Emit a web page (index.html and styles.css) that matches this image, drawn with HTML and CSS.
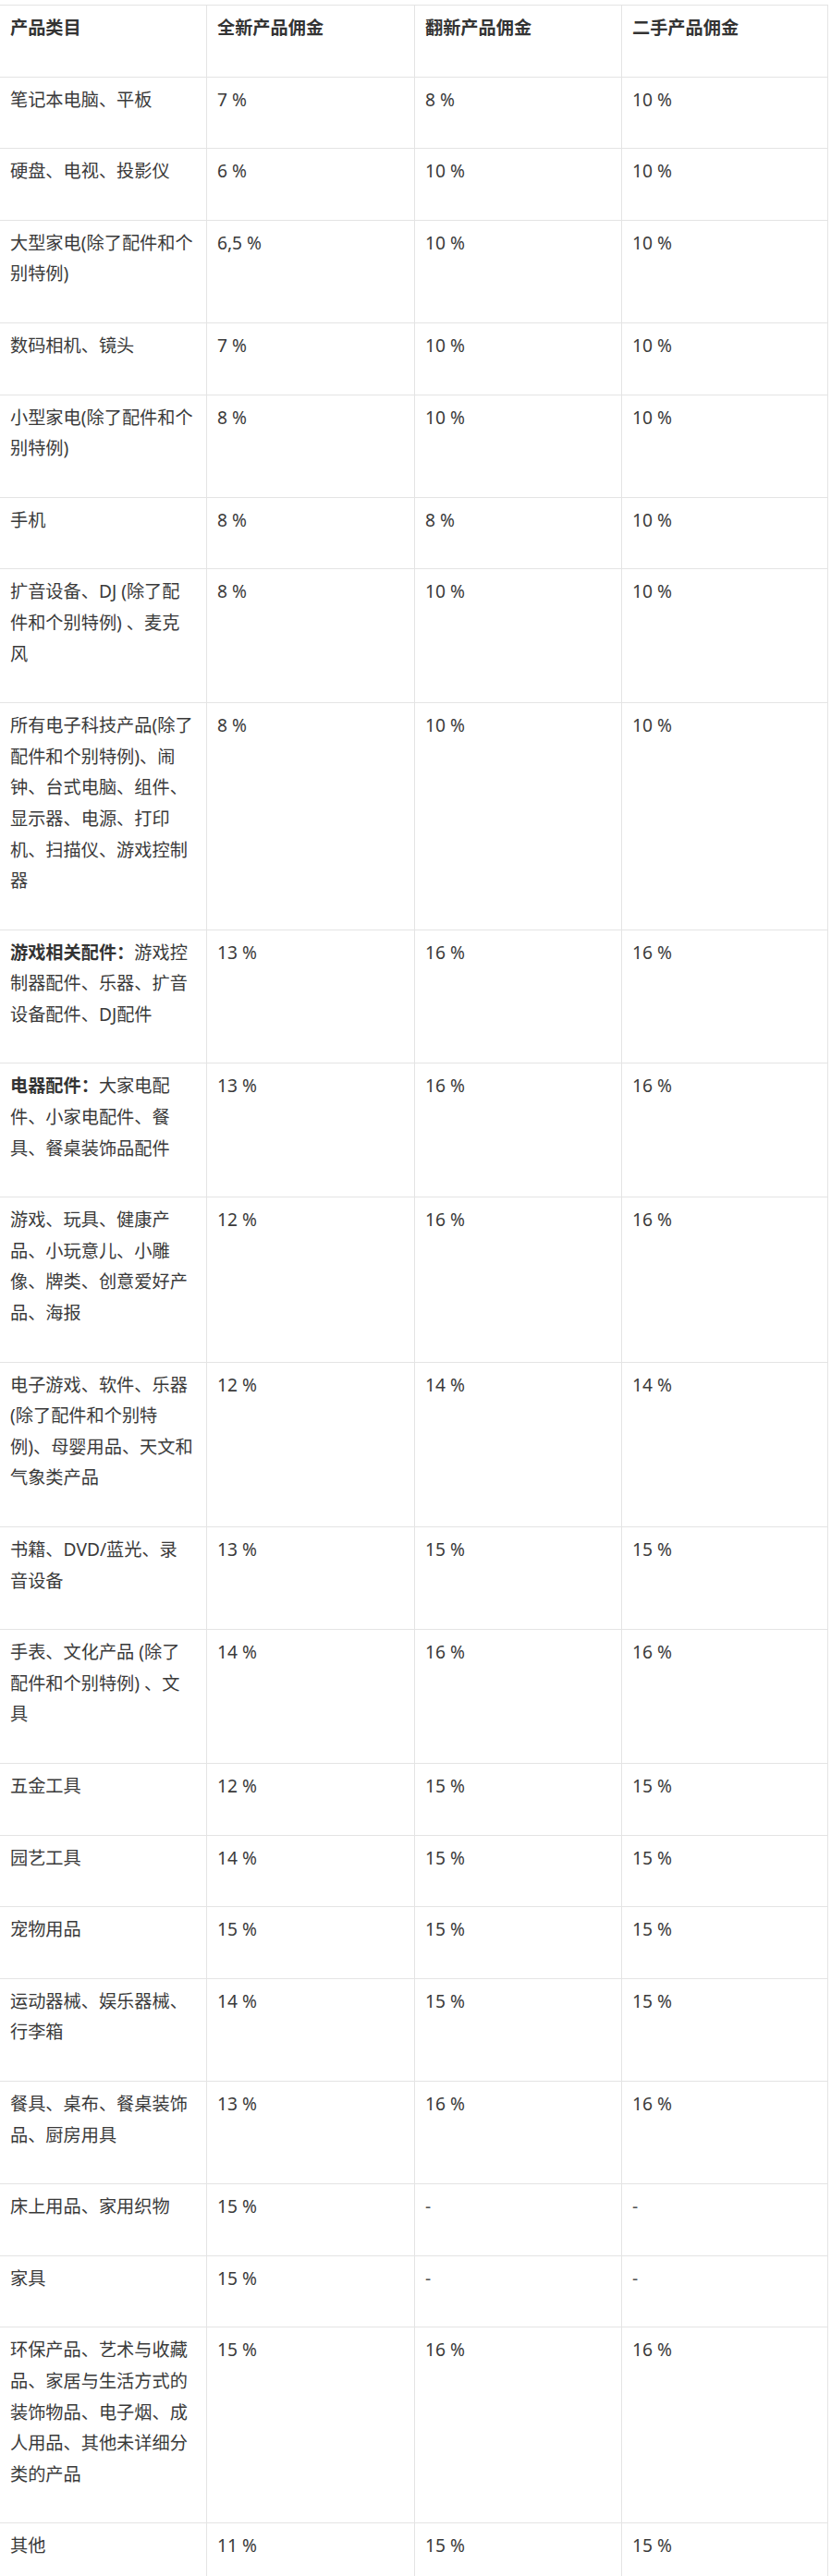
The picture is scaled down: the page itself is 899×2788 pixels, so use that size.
FILE: index.html
```html
<!DOCTYPE html>
<html lang="zh-CN">
<head>
<meta charset="utf-8">
<title>产品佣金</title>
<link rel="stylesheet" href="styles.css">
</head>
<body>
<table class="fees">
  <colgroup>
    <col class="c1"><col class="c2"><col class="c3"><col class="c4">
  </colgroup>
  <thead>
    <tr><th>产品类目</th><th>全新产品佣金</th><th>翻新产品佣金</th><th>二手产品佣金</th></tr>
  </thead>
  <tbody>
    <tr><td>笔记本电脑、平板</td><td>7 %</td><td>8 %</td><td>10 %</td></tr>
    <tr><td>硬盘、电视、投影仪</td><td>6 %</td><td>10 %</td><td>10 %</td></tr>
    <tr><td>大型家电(除了配件和个<br>别特例)</td><td>6,5 %</td><td>10 %</td><td>10 %</td></tr>
    <tr><td>数码相机、镜头</td><td>7 %</td><td>10 %</td><td>10 %</td></tr>
    <tr><td>小型家电(除了配件和个<br>别特例)</td><td>8 %</td><td>10 %</td><td>10 %</td></tr>
    <tr><td>手机</td><td>8 %</td><td>8 %</td><td>10 %</td></tr>
    <tr><td>扩音设备、DJ (除了配<br>件和个别特例) 、麦克<br>风</td><td>8 %</td><td>10 %</td><td>10 %</td></tr>
    <tr><td>所有电子科技产品(除了<br>配件和个别特例)、闹<br>钟、台式电脑、组件、<br>显示器、电源、打印<br>机、扫描仪、游戏控制<br>器</td><td>8 %</td><td>10 %</td><td>10 %</td></tr>
    <tr><td><strong>游戏相关配件：</strong>游戏控<br>制器配件、乐器、扩音<br>设备配件、DJ配件</td><td>13 %</td><td>16 %</td><td>16 %</td></tr>
    <tr><td><strong>电器配件：</strong>大家电配<br>件、小家电配件、餐<br>具、餐桌装饰品配件</td><td>13 %</td><td>16 %</td><td>16 %</td></tr>
    <tr><td>游戏、玩具、健康产<br>品、小玩意儿、小雕<br>像、牌类、创意爱好产<br>品、海报</td><td>12 %</td><td>16 %</td><td>16 %</td></tr>
    <tr><td>电子游戏、软件、乐器<br>(除了配件和个别特<br>例)、母婴用品、天文和<br>气象类产品</td><td>12 %</td><td>14 %</td><td>14 %</td></tr>
    <tr><td>书籍、DVD/蓝光、录<br>音设备</td><td>13 %</td><td>15 %</td><td>15 %</td></tr>
    <tr><td>手表、文化产品 (除了<br>配件和个别特例) 、文<br>具</td><td>14 %</td><td>16 %</td><td>16 %</td></tr>
    <tr><td>五金工具</td><td>12 %</td><td>15 %</td><td>15 %</td></tr>
    <tr><td>园艺工具</td><td>14 %</td><td>15 %</td><td>15 %</td></tr>
    <tr><td>宠物用品</td><td>15 %</td><td>15 %</td><td>15 %</td></tr>
    <tr><td>运动器械、娱乐器械、<br>行李箱</td><td>14 %</td><td>15 %</td><td>15 %</td></tr>
    <tr><td>餐具、桌布、餐桌装饰<br>品、厨房用具</td><td>13 %</td><td>16 %</td><td>16 %</td></tr>
    <tr><td>床上用品、家用织物</td><td>15 %</td><td class="dash">-</td><td class="dash">-</td></tr>
    <tr><td>家具</td><td>15 %</td><td class="dash">-</td><td class="dash">-</td></tr>
    <tr><td>环保产品、艺术与收藏<br>品、家居与生活方式的<br>装饰物品、电子烟、成<br>人用品、其他未详细分<br>类的产品</td><td>15 %</td><td>16 %</td><td>16 %</td></tr>
    <tr><td>其他</td><td>11 %</td><td>15 %</td><td>15 %</td></tr>
  </tbody>
</table>
</body>
</html>
```

FILE: styles.css
```css
html, body {
  margin: 0;
  padding: 0;
  background: #ffffff;
}

body {
  font-family: "Noto Sans", "Noto Sans CJK SC", sans-serif;
  font-size: 19.2px;
  line-height: 33.6px;
  color: #3a3a3a;
}

.fees {
  border-collapse: collapse;
  table-layout: fixed;
  width: 896px;
  margin: 5px 0 0 -1px;
}

.c1 { width: 224px; }
.c2 { width: 225px; }
.c3 { width: 224px; }
.c4 { width: 223px; }

.fees th,
.fees td {
  border: 1px solid #e4e4e4;
  padding: 7px 11px 36px;
  text-align: left;
  vertical-align: top;
  white-space: nowrap;
}

.fees th {
  font-weight: 700;
  color: #333333;
}

.fees strong {
  font-weight: 700;
  color: #333333;
}

.fees td.dash {
  color: #555555;
}
```
